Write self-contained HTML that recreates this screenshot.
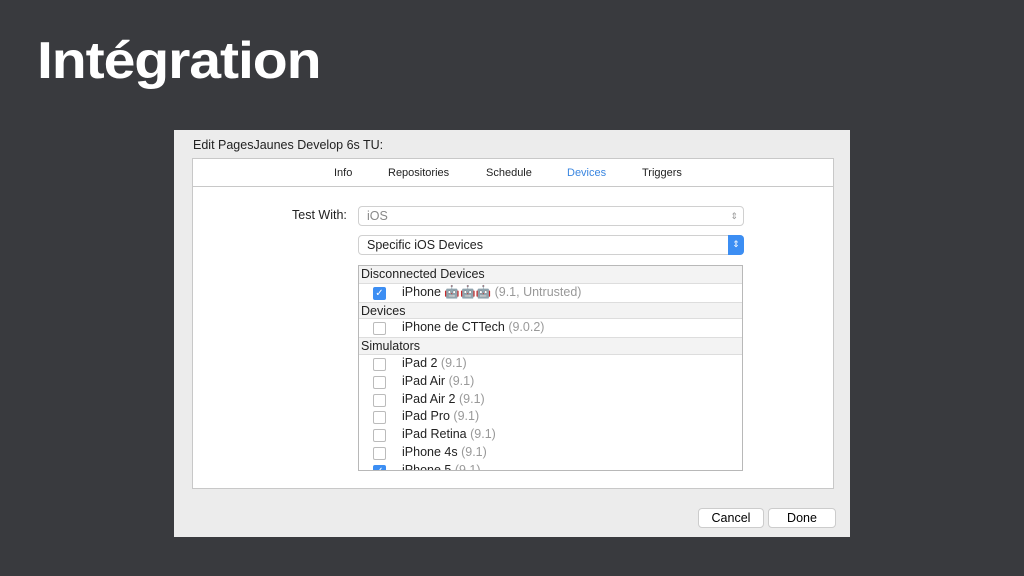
<!DOCTYPE html>
<html><head><meta charset="utf-8"><style>
body{margin:0;width:1024px;height:576px;background:#393a3e;position:relative;overflow:hidden;font-family:"Liberation Sans",sans-serif}
.t{position:absolute;left:37px;top:31px;color:#fff;font-weight:bold;font-size:52px;letter-spacing:-1px;transform:scaleX(1.1);transform-origin:left}
.dlg{position:absolute;left:174px;top:130px;width:676px;height:407px;background:#ececec}
.a{position:absolute;font-size:12px;color:#222;white-space:nowrap}
.panel{position:absolute;left:18px;top:28px;width:642px;height:331px;background:#fff;border:1px solid #c8c8c8;box-sizing:border-box}
.tabs{position:absolute;left:0;top:0;right:0;height:27px;border-bottom:1px solid #c8c8c8}
.sel{position:absolute;border:1px solid #d0d0d0;border-radius:4px;background:#fff;font-size:12.5px;padding-left:8px;line-height:19px;box-sizing:border-box;height:20px}
.list{position:absolute;left:184px;top:134px;width:385px;height:206px;border:1px solid #b8b8b8;box-sizing:border-box;overflow:hidden}
.r{height:17.8px;line-height:17.8px;font-size:12.5px;position:relative;white-space:nowrap}
.h{background:#f3f3f3;border-bottom:1px solid #ddd;border-top:1px solid #ddd;padding-left:2px;box-sizing:border-box;color:#222}
.cb{position:absolute;left:14px;top:3px;width:11px;height:11px;border:1px solid #bbb;border-radius:2px;background:#fff}
.cb.on{background:#3c8ef3;border-color:#3c8ef3;color:#fff;font-size:10px;line-height:11px;text-align:center}
.n{position:absolute;left:43px;color:#222}
.g{color:#999}
.btn{position:absolute;top:378px;height:20px;background:#fff;border:1px solid #ccc;border-radius:4px;font-size:12.5px;text-align:center;line-height:19px;box-sizing:border-box}
</style></head><body>
<div class="t">Intégration</div>
<div class="dlg">
<div class="a" style="left:19px;top:8px;font-size:12.5px">Edit PagesJaunes Develop 6s TU:</div>
<div class="panel">
<div class="tabs">
<div class="a" style="left:141px;top:8px;font-size:11px">Info</div>
<div class="a" style="left:195px;top:8px;font-size:11px">Repositories</div>
<div class="a" style="left:293px;top:8px;font-size:11px">Schedule</div>
<div class="a" style="left:374px;top:8px;font-size:11px;color:#3a86e0">Devices</div>
<div class="a" style="left:449px;top:8px;font-size:11px">Triggers</div>
</div>
<div class="a" style="left:99px;top:49px;font-size:12.5px">Test With:</div>
<div class="sel" style="left:165px;top:47px;width:386px;color:#888">iOS<span style="position:absolute;right:5px;top:0;color:#999;font-size:9px">&#8661;</span></div>
<div class="sel" style="left:165px;top:76px;width:386px;color:#222">Specific iOS Devices<span style="position:absolute;right:-1px;top:-1px;width:16px;height:20px;background:#3c8ef3;border-radius:0 4px 4px 0;color:#fff;font-size:9px;text-align:center">&#8661;</span></div>
</div>
</div>
<div class="list" style="left:358px;top:265px">
<div class="r h" style="border-top:0">Disconnected Devices</div>
<div class="r"><span class="cb on">✓</span><span class="n">iPhone <span style="color:#7a9aa8">🤖🤖🤖</span> <span class="g">(9.1, Untrusted)</span></span></div>
<div class="r h">Devices</div>
<div class="r"><span class="cb"></span><span class="n">iPhone de CTTech <span class="g">(9.0.2)</span></span></div>
<div class="r h">Simulators</div>
<div class="r"><span class="cb"></span><span class="n">iPad 2 <span class="g">(9.1)</span></span></div>
<div class="r"><span class="cb"></span><span class="n">iPad Air <span class="g">(9.1)</span></span></div>
<div class="r"><span class="cb"></span><span class="n">iPad Air 2 <span class="g">(9.1)</span></span></div>
<div class="r"><span class="cb"></span><span class="n">iPad Pro <span class="g">(9.1)</span></span></div>
<div class="r"><span class="cb"></span><span class="n">iPad Retina <span class="g">(9.1)</span></span></div>
<div class="r"><span class="cb"></span><span class="n">iPhone 4s <span class="g">(9.1)</span></span></div>
<div class="r"><span class="cb on">✓</span><span class="n">iPhone 5 <span class="g">(9.1)</span></span></div>
</div>
<div class="dlg" style="background:none;pointer-events:none">
<div class="btn" style="left:524px;width:66px">Cancel</div>
<div class="btn" style="left:594px;width:68px">Done</div>
</div>
</body></html>
